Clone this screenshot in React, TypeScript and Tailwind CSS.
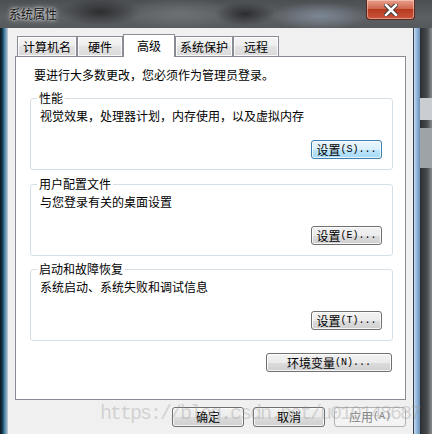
type BtnProps = {
  cn: string;
  latin: string;
  className?: string;
  variant?: "normal" | "focus" | "disabled";
};

function Btn({ cn, latin, className = "", variant = "normal" }: BtnProps) {
  const skin =
    variant === "focus"
      ? "border-[#3c7fb1] bg-[linear-gradient(180deg,#eaf6fd_0%,#d9f0fc_50%,#bee6fd_50%,#a7d9f5_100%)] shadow-[inset_0_0_0_1px_rgba(255,255,255,0.7)] text-black"
      : variant === "disabled"
        ? "border-[#adb2b5] bg-[#f4f4f4] text-[#838383]"
        : "border-[#707070] bg-[linear-gradient(180deg,#f2f2f2_0%,#ebebeb_50%,#dddddd_50%,#cfcfcf_100%)] shadow-[inset_0_0_0_1px_rgba(255,255,255,0.8)] text-black";
  return (
    <div
      className={`flex h-[19px] items-center justify-center rounded-[3px] border leading-none ${skin} ${className}`}
    >
      <span>{cn}</span>
      <span className="font-['Liberation_Mono',monospace] text-[10px]">{latin}</span>
    </div>
  );
}

type GroupProps = {
  title: string;
  text: string;
  btn: React.ReactNode;
  className?: string;
};

function Group({ title, text, btn, className = "" }: GroupProps) {
  return (
    <div className={`ml-[14px] h-[72px] w-[363px] rounded-[3px] border border-[#d5dfe5] ${className}`}>
      <div className="-mt-[9px] ml-[6px] w-fit bg-white px-[2px] leading-[16px]">{title}</div>
      <div className="mt-[2px] pl-[9px] leading-[16px]">{text}</div>
      <div className="mt-[16px] flex justify-end pr-[10px]">{btn}</div>
    </div>
  );
}

const tabs = [
  { label: "计算机名", w: "w-[60px]" },
  { label: "硬件", w: "w-[46px]" },
  { label: "高级", w: "w-[52px]", active: true },
  { label: "系统保护", w: "w-[58px]" },
  { label: "远程", w: "w-[46px]" },
];

export default function App() {
  return (
    <div className="relative flex h-[434px] w-[432px] flex-col overflow-hidden bg-[#15191d] font-['Noto_Sans_CJK_SC',sans-serif] text-[12px] text-black">
      {/* title bar */}
      <div className="flex h-[28px] shrink-0 items-start bg-[radial-gradient(ellipse_40px_14px_at_100px_12px,#2c2e30,transparent),radial-gradient(ellipse_30px_12px_at_245px_14px,#2a2c2f,transparent),radial-gradient(ellipse_50px_14px_at_320px_16px,#7c8794,transparent),radial-gradient(ellipse_60px_16px_at_180px_14px,#6e7174,transparent),linear-gradient(180deg,#4c4f52,#5d6063_60%,#56595c)]">
        <div className="pl-[9px] pt-[6px] leading-[16px] text-[12px] text-[#111] [text-shadow:0_0_6px_#e8e8e8,0_0_3px_#ffffff]">
          系统属性
        </div>
        <div className="ml-auto mr-[17px] flex h-[20px] w-[49px] items-center justify-center rounded-b-[4px] border border-t-0 border-[#5a2a20] bg-[linear-gradient(180deg,#e8a08c_0%,#d0674f_45%,#b73a20_50%,#c9553a_100%)] shadow-[inset_0_0_0_1px_rgba(255,220,210,0.5)]">
          <svg width="14" height="12" viewBox="0 0 14 12">
            <path d="M2 1 L12 11 M12 1 L2 11" stroke="#3a3a3a" strokeWidth="4.5" strokeLinecap="square" />
            <path d="M2 1 L12 11 M12 1 L2 11" stroke="#ffffff" strokeWidth="2.5" strokeLinecap="square" />
          </svg>
        </div>
      </div>

      <div className="flex flex-1">
        {/* left frame */}
        <div className="w-[8px] bg-[linear-gradient(90deg,#0c141c_0%,#163a4e_30%,#3f7fa3_55%,#8aa6bf_80%,#c7d0d8_100%)]" />

        {/* client area */}
        <div className="flex w-[405px] flex-col bg-[#f0f0f0]">
          {/* tabs */}
          <div className="mt-[6px] flex h-[22px] items-end pl-[9px]">
            {tabs.map((t) =>
              t.active ? (
                <div
                  key={t.label}
                  className={`relative z-10 -mb-px flex h-[23px] justify-center border border-b-0 border-[#898c95] bg-white pt-[3px] leading-[16px] ${t.w}`}
                >
                  {t.label}
                </div>
              ) : (
                <div
                  key={t.label}
                  className={`flex h-[20px] justify-center border border-b-0 border-[#898c95] bg-[linear-gradient(180deg,#f5f5f5,#ededed_50%,#e3e3e3_50%,#dadada)] pt-[2px] leading-[16px] shadow-[inset_0_0_0_1px_rgba(255,255,255,0.8)] ${t.w}`}
                >
                  {t.label}
                </div>
              ),
            )}
          </div>

          {/* panel */}
          <div className="ml-[7px] flex h-[344px] w-[391px] flex-col border border-[#898c95] bg-white">
            <div className="pl-[18px] pt-[10px] leading-[16px]">要进行大多数更改，您必须作为管理员登录。</div>
            <Group
              className="mt-[15px]"
              title="性能"
              text="视觉效果，处理器计划，内存使用，以及虚拟内存"
              btn={<Btn cn="设置" latin="(S)..." variant="focus" className="w-[71px]" />}
            />
            <Group
              className="mt-[14px]"
              title="用户配置文件"
              text="与您登录有关的桌面设置"
              btn={<Btn cn="设置" latin="(E)..." className="w-[71px]" />}
            />
            <Group
              className="mt-[13px]"
              title="启动和故障恢复"
              text="系统启动、系统失败和调试信息"
              btn={<Btn cn="设置" latin="(T)..." className="w-[71px]" />}
            />
            <div className="mt-[12px] flex justify-end pr-[13px]">
              <Btn cn="环境变量" latin="(N)..." className="w-[126px]" />
            </div>
          </div>

          {/* dialog buttons */}
          <div className="mt-[7px] flex justify-end gap-[9px] pr-[7px]">
            <Btn cn="确定" latin="" className="h-[20px] w-[72px]" />
            <Btn cn="取消" latin="" className="h-[20px] w-[72px]" />
            <Btn cn="应用" latin="(A)" variant="disabled" className="h-[20px] w-[72px]" />
          </div>
        </div>

        {/* right frame */}
        <div className="flex flex-1">
          <div className="w-px bg-[#3a4048]" />
          <div className="w-[6px] bg-[linear-gradient(90deg,#c5dcf2,#8fb4d9_50%,#6d8fb3)]" />
          <div className="flex flex-1 flex-col bg-[linear-gradient(90deg,#2b2e31,#4a4d50_60%,#8a8c8e)]">
            <div className="mt-[70px] h-[22px] bg-[#c9ccd0]" />
            <div className="mt-[8px] h-[40px] bg-[#9ea3a8]" />
          </div>
        </div>
      </div>

      {/* watermark */}
      <div className="pointer-events-none absolute left-[100px] top-[402px] font-['Liberation_Mono',monospace] text-[20px] leading-[24px] tracking-[-2px] text-[rgba(150,150,150,0.35)]">
        https://blog.csdn.net/u010148687
      </div>
    </div>
  );
}
